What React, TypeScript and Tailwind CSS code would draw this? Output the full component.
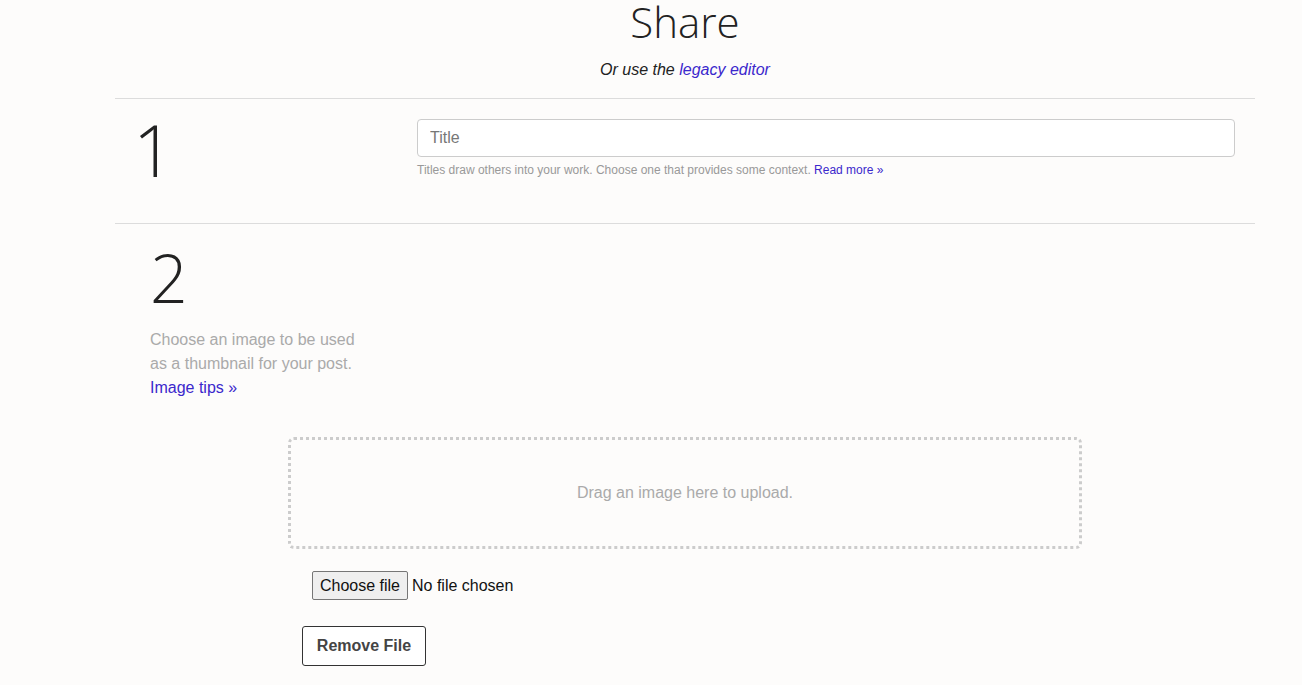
import React from "react";

export default function App() {
  return (
    <div className="min-h-[685px] w-[1370px] bg-[#fdfcfb] font-['Liberation_Sans',Arial,sans-serif] text-[#222]">
      <div className="mx-auto w-[1140px]">
        <div className="flex flex-col items-center">
          <h1 className="font-['Open_Sans',sans-serif] text-[42px] font-light leading-[44px] text-[#222]">Share</h1>
          <p className="mt-[16px] text-[16px] italic leading-[20px]">
            Or use the <a className="text-[#3b28cc]" href="#">legacy editor</a>
          </p>
        </div>
        <div className="mt-[18px] border-t border-[#dcdcdc]" />
        <div className="flex h-[124px]">
          <div className="w-[302px] pl-[18px] pt-[10px]">
            <div className="font-['Open_Sans',sans-serif] text-[72px] font-light leading-[80px] text-[#222]">1</div>
          </div>
          <div className="flex-1 pr-[20px] pt-[20px]">
            <input
              type="text"
              placeholder="Title"
              className="h-[38px] w-full rounded-[4px] border border-[#ccc] bg-white px-[12px] text-[16px] placeholder:text-[#777] outline-none"
            />
            <p className="mt-[5px] text-[12px] leading-[16px] text-[#999]">
              Titles draw others into your work. Choose one that provides some context.{" "}
              <a className="text-[#3b28cc]" href="#">Read more »</a>
            </p>
          </div>
        </div>
        <div className="border-t border-[#dcdcdc]" />
        <div className="pl-[35px] pt-[10px]">
          <div className="font-['Open_Sans',sans-serif] text-[66px] font-light leading-[86px] text-[#222]">2</div>
          <p className="mt-[8px] text-[16px] leading-[24px] text-[#aaa]">
            Choose an image to be used
            <br />
            as a thumbnail for your post.
            <br />
            <a className="text-[#3b28cc]" href="#">Image tips »</a>
          </p>
        </div>
        <div className="mt-[37px] flex flex-col">
          <div className="ml-[173px] flex h-[112px] w-[794px] items-center justify-center rounded-[6px] border-[3px] border-dotted border-[#ccc] text-[16px] text-[#aaa]">
            Drag an image here to upload.
          </div>
          <div className="ml-[197px] mt-[22px] flex items-center">
            <label className="flex h-[29px] w-[96px] cursor-pointer items-center justify-center rounded-[2px] border border-[#767676] bg-[#efefef] text-[16px] text-[#111]">
              Choose file
              <input type="file" className="hidden" />
            </label>
            <span className="ml-[4px] text-[16px] text-[#111]">No file chosen</span>
          </div>
          <div className="ml-[187px] mt-[26px]">
            <button className="h-[40px] w-[124px] rounded-[3px] border border-[#333] bg-white text-[16px] font-bold text-[#444]">
              Remove File
            </button>
          </div>
        </div>
      </div>
    </div>
  );
}
